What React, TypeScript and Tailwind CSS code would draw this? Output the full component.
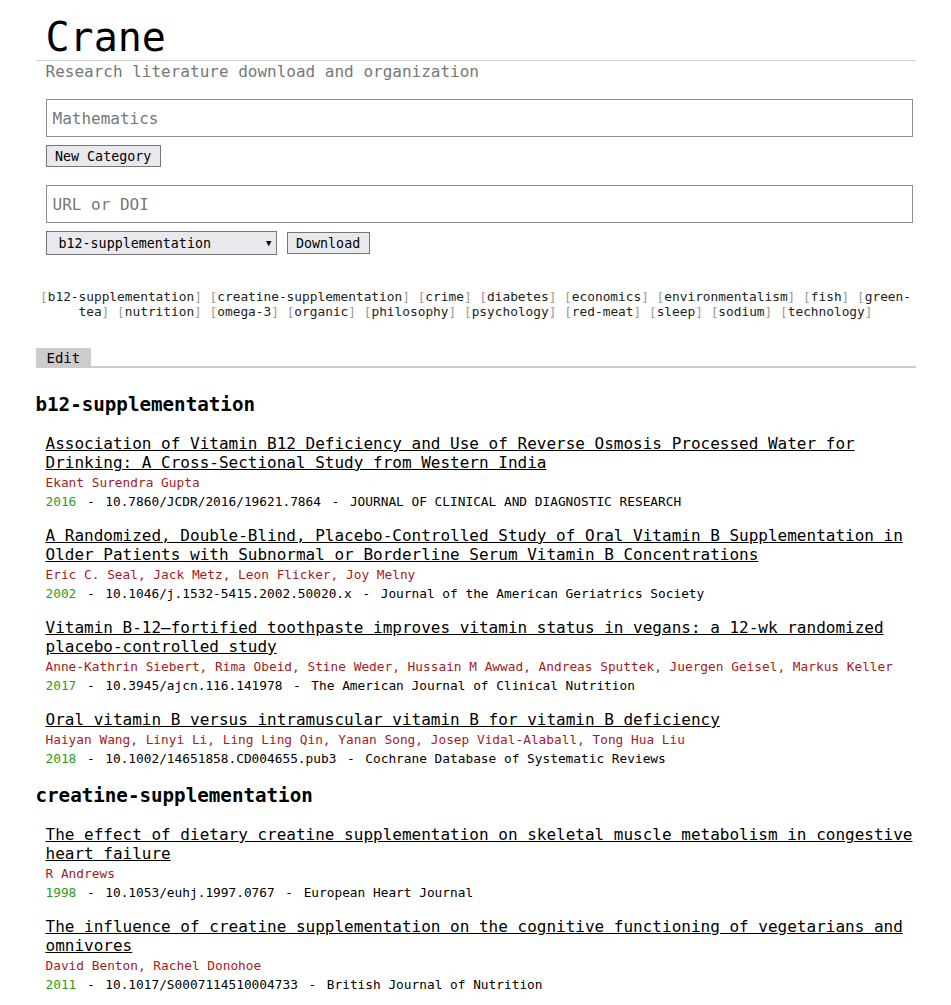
import React from "react";

type Article = {
  title: string;
  authors: string;
  year: string;
  doi: string;
  journal: string;
};

const tags = [
  "b12-supplementation",
  "creatine-supplementation",
  "crime",
  "diabetes",
  "economics",
  "environmentalism",
  "fish",
  "green-tea",
  "nutrition",
  "omega-3",
  "organic",
  "philosophy",
  "psychology",
  "red-meat",
  "sleep",
  "sodium",
  "technology",
];

const sections: { name: string; articles: Article[] }[] = [
  {
    name: "b12-supplementation",
    articles: [
      {
        title:
          "Association of Vitamin B12 Deficiency and Use of Reverse Osmosis Processed Water for Drinking: A Cross-Sectional Study from Western India",
        authors: "Ekant Surendra Gupta",
        year: "2016",
        doi: "10.7860/JCDR/2016/19621.7864",
        journal: "JOURNAL OF CLINICAL AND DIAGNOSTIC RESEARCH",
      },
      {
        title:
          "A Randomized, Double-Blind, Placebo-Controlled Study of Oral Vitamin B Supplementation in Older Patients with Subnormal or Borderline Serum Vitamin B Concentrations",
        authors: "Eric C. Seal, Jack Metz, Leon Flicker, Joy Melny",
        year: "2002",
        doi: "10.1046/j.1532-5415.2002.50020.x",
        journal: "Journal of the American Geriatrics Society",
      },
      {
        title:
          "Vitamin B-12\u2013fortified toothpaste improves vitamin status in vegans: a 12-wk randomized placebo-controlled study",
        authors:
          "Anne-Kathrin Siebert, Rima Obeid, Stine Weder, Hussain M Awwad, Andreas Sputtek, Juergen Geisel, Markus Keller",
        year: "2017",
        doi: "10.3945/ajcn.116.141978",
        journal: "The American Journal of Clinical Nutrition",
      },
      {
        title: "Oral vitamin B versus intramuscular vitamin B for vitamin B deficiency",
        authors:
          "Haiyan Wang, Linyi Li, Ling Ling Qin, Yanan Song, Josep Vidal-Alaball, Tong Hua Liu",
        year: "2018",
        doi: "10.1002/14651858.CD004655.pub3",
        journal: "Cochrane Database of Systematic Reviews",
      },
    ],
  },
  {
    name: "creatine-supplementation",
    articles: [
      {
        title:
          "The effect of dietary creatine supplementation on skeletal muscle metabolism in congestive heart failure",
        authors: "R Andrews",
        year: "1998",
        doi: "10.1053/euhj.1997.0767",
        journal: "European Heart Journal",
      },
      {
        title:
          "The influence of creatine supplementation on the cognitive functioning of vegetarians and omnivores",
        authors: "David Benton, Rachel Donohoe",
        year: "2011",
        doi: "10.1017/S0007114510004733",
        journal: "British Journal of Nutrition",
      },
    ],
  },
];

function ArticleItem({ a }: { a: Article }) {
  return (
    <div className="pl-[10px]">
      <a href="#" className="block text-[16px] text-black underline">
        {a.title}
      </a>
      <div className="mt-[3px] text-[12.8px] text-[#a61b1b]">{a.authors}</div>
      <div className="mt-[4px] text-[12.8px] text-black">
        <span className="text-[#1f9e1f]">{a.year}</span>
        <span className="mx-[10.6px]">-</span>
        <span>{a.doi}</span>
        <span className="mx-[10.6px]">-</span>
        <span>{a.journal}</span>
      </div>
    </div>
  );
}

export default function App() {
  return (
    <div className="mx-auto w-[880px] pb-[40px] font-['DejaVu_Sans_Mono',monospace] leading-[normal] text-black">
      <header className="border-b border-[#cccccc] px-[10px] pt-[14px]">
        <h1 className="text-[40px] font-normal leading-[normal]">Crane</h1>
      </header>
      <p className="px-[10px] pt-[1px] text-[16px] text-[#777777]">
        Research literature download and organization
      </p>

      <div className="mt-[18px] px-[10px]">
        <input
          placeholder="Mathematics"
          className="block h-[38px] w-[867px] border border-[#8f8f8f] bg-white px-[6px] text-[16px] outline-none placeholder:text-[#777777]"
        />
        <button className="mt-[8px] block h-[22px] border border-[#767676] bg-[#e9e9ed] px-[8.5px] text-[13.33px] leading-[normal] text-black">
          New Category
        </button>

        <input
          placeholder="URL or DOI"
          className="mt-[18px] block h-[38px] w-[867px] border border-[#8f8f8f] bg-white px-[6px] text-[16px] outline-none placeholder:text-[#777777]"
        />
        <div className="mt-[8px] flex items-center gap-[10px]">
          <div className="relative h-[24px] w-[231px]">
            <select
              defaultValue="b12-supplementation"
              className="block h-[24px] w-[231px] appearance-none border border-[#767676] bg-[#e9e9ed] pl-[12px] text-[13.33px] leading-[normal] text-black outline-none"
            >
              {tags.map((t) => (
                <option key={t} value={t}>
                  {t}
                </option>
              ))}
            </select>
            <span className="pointer-events-none absolute right-[5px] top-[4px] text-[9px] leading-[16px] text-black">
              ▼
            </span>
          </div>
          <button className="h-[22px] border border-[#767676] bg-[#e9e9ed] px-[8.5px] text-[13.33px] leading-[normal] text-black">
            Download
          </button>
        </div>
      </div>

      <div className="mt-[34px] text-center text-[12.8px]">
        {tags.map((t, i) => (
          <React.Fragment key={t}>
            <span className="text-[#999999]">[</span>
            <a href="#" className="text-[#222222]">
              {t}
            </a>
            <span className="text-[#999999]">]</span>
            {i < tags.length - 1 ? " " : null}
          </React.Fragment>
        ))}
      </div>

      <div className="mt-[29px] flex items-end">
        <div className="bg-[#cccccc] px-[11px] py-[2px] text-[14px] text-black">Edit</div>
        <div className="flex-1 border-b-2 border-[#cccccc]" />
      </div>

      {sections.map((s, si) => (
        <section key={s.name} className={si === 0 ? "mt-[25px]" : "mt-[18px]"}>
          <h2 className="mb-[18px] text-[19.2px] font-bold text-black">{s.name}</h2>
          <div className="flex flex-col gap-[17px]">
            {s.articles.map((a) => (
              <ArticleItem key={a.doi} a={a} />
            ))}
          </div>
        </section>
      ))}
    </div>
  );
}
